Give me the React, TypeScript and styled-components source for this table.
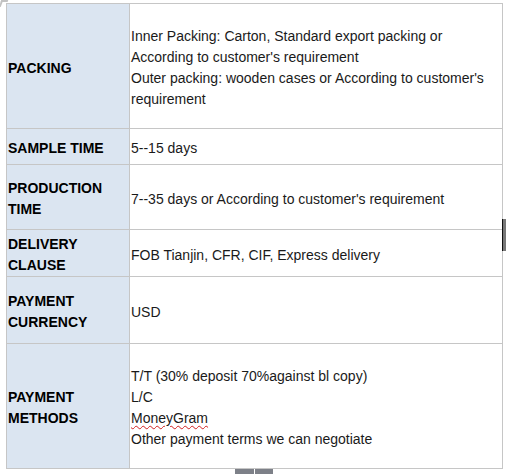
import styled, { createGlobalStyle } from "styled-components";

const GlobalStyle = createGlobalStyle`
  html, body {
    margin: 0;
    padding: 0;
    background: #fff;
  }
  body {
    font-family: "Liberation Sans", Arial, sans-serif;
  }
`;

const Page = styled.div`
  position: relative;
  width: 506px;
  height: 474px;
  overflow: hidden;
  padding: 3px 0 0 6px;
  box-sizing: border-box;
`;

const Sheet = styled.table`
  border-collapse: collapse;
  table-layout: fixed;
  width: 497px;
  font-size: 14px;
  line-height: 21px;
`;

const Row = styled.tr<{ $h: number }>`
  height: ${(p) => p.$h}px;
`;

const Label = styled.th`
  width: 119px;
  background: #dbe5f1;
  border: 1px solid #c6c6c6;
  padding: 4px 2px 0 1px;
  text-align: left;
  vertical-align: middle;
  font-weight: bold;
  color: #000;
`;

const Value = styled.td`
  border: 1px solid #c6c6c6;
  padding: 4px 2px 0 1px;
  vertical-align: middle;
  color: #1a1a1a;
`;

const Line = styled.div``;

const Misspelt = styled.span`
  text-decoration: underline wavy #d02020;
  text-decoration-thickness: 1px;
  text-underline-offset: 2px;
`;

const CornerMark = styled.div`
  position: absolute;
  left: 0;
  top: 0;
  width: 5px;
  height: 5px;
  border-top: 2px solid #9a9a9a;
  border-left: 2px solid #9a9a9a;
  transform: skewX(-20deg);
  opacity: 0.6;
`;

const SideHandle = styled.div`
  position: absolute;
  right: 0;
  top: 219px;
  width: 3px;
  height: 32px;
  background: #777;
  border-left: 1px solid #111;
`;

const BottomHandle = styled.div`
  position: absolute;
  left: 235px;
  bottom: 0;
  width: 38px;
  height: 5px;
  display: flex;
  gap: 1px;

  span {
    flex: 1;
    background: #7d8088;
  }
`;

const rows: { label: string[]; value: React.ReactNode[]; h: number }[] = [
  {
    label: ["PACKING"],
    value: [
      "Inner Packing: Carton, Standard export packing or",
      "According to customer's requirement",
      "Outer packing: wooden cases or According to customer's",
      "requirement",
    ],
    h: 125,
  },
  { label: ["SAMPLE TIME"], value: ["5--15 days"], h: 36 },
  {
    label: ["PRODUCTION", "TIME"],
    value: ["7--35 days or According to customer's requirement"],
    h: 65,
  },
  {
    label: ["DELIVERY", "CLAUSE"],
    value: ["FOB Tianjin, CFR, CIF, Express delivery"],
    h: 45,
  },
  { label: ["PAYMENT", "CURRENCY"], value: ["USD"], h: 67 },
  {
    label: ["PAYMENT", "METHODS"],
    value: [
      "T/T (30% deposit 70%against bl copy)",
      "L/C",
      <Misspelt key="mg">MoneyGram</Misspelt>,
      "Other payment terms we can negotiate",
    ],
    h: 125,
  },
];

export default function App() {
  return (
    <>
      <GlobalStyle />
      <Page>
        <Sheet>
          <tbody>
            {rows.map((r) => (
              <Row key={r.label.join(" ")} $h={r.h}>
                <Label>
                  {r.label.map((l) => (
                    <Line key={l}>{l}</Line>
                  ))}
                </Label>
                <Value>
                  {r.value.map((v, i) => (
                    <Line key={i}>{v}</Line>
                  ))}
                </Value>
              </Row>
            ))}
          </tbody>
        </Sheet>
        <CornerMark />
        <SideHandle />
        <BottomHandle>
          <span />
          <span />
        </BottomHandle>
      </Page>
    </>
  );
}
